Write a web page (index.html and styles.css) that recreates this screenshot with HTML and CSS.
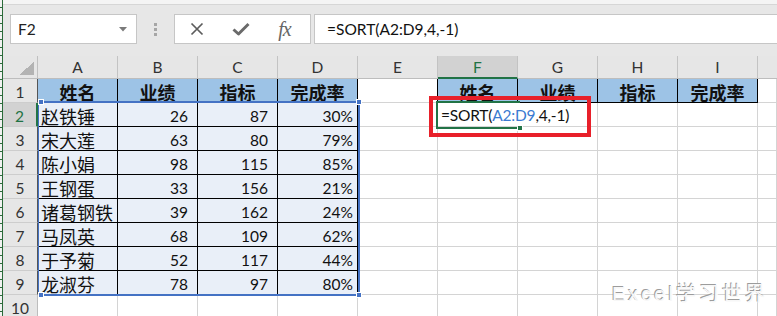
FILE: index.html
```html
<!DOCTYPE html>
<html lang="zh-CN">
<head>
<meta charset="utf-8">
<title>Excel SORT</title>
<link rel="stylesheet" href="styles.css">
</head>
<body>
<div class="app">
  <div class="edge"></div>
  <div class="main">
    <div class="topband"></div>
    <div class="fbar">
      <div class="namebox"><span>F2</span><svg class="dd" width="8" height="5" viewBox="0 0 8 5"><path d="M0 0H8L4 4.5Z" fill="#7a7a7a"/></svg></div>
      <div class="grip"><i></i><i></i><i></i></div>
      <div class="btns">
        <span class="slot"><svg width="14" height="14" viewBox="0 0 14 14"><path d="M1.5 1.5L12.5 12.5M12.5 1.5L1.5 12.5" stroke="#5c5c5c" stroke-width="1.7" fill="none"/></svg></span>
        <span class="slot"><svg width="18" height="14" viewBox="0 0 18 14"><path d="M1.5 7.5L6.5 12L16.5 2" stroke="#6a6a6a" stroke-width="3" fill="none" stroke-linejoin="round"/></svg></span>
        <span class="slot fx">fx</span>
      </div>
      <div class="formula">=SORT(A2:D9,4,-1)</div>
    </div>
    <div class="sheet">
      <div class="c corner"></div>
      <div class="c ch">A</div><div class="c ch">B</div><div class="c ch">C</div><div class="c ch">D</div><div class="c ch">E</div><div class="c ch sel">F</div><div class="c ch">G</div><div class="c ch">H</div><div class="c ch">I</div><div class="c ch last"></div>

      <div class="c rh dk">1</div>
      <div class="c t th">姓名</div><div class="c t th">业绩</div><div class="c t th">指标</div><div class="c t th">完成率</div><div class="c e1"></div><div class="c t th">姓名</div><div class="c t th">业绩</div><div class="c t th">指标</div><div class="c t th">完成率</div><div class="c"></div>

      <div class="c rh dk sel">2</div>
      <div class="c t td">赵铁锤</div><div class="c t td n">26</div><div class="c t td n">87</div><div class="c t td p">30%</div><div class="c"></div><div class="c f2">=SORT(<span class="ref">A2:D9</span>,4,-1)<span class="caret"></span></div><div class="c"></div><div class="c"></div><div class="c"></div><div class="c"></div>

      <div class="c rh dk">3</div>
      <div class="c t td">宋大莲</div><div class="c t td n">63</div><div class="c t td n">80</div><div class="c t td p">79%</div><div class="c"></div><div class="c"></div><div class="c"></div><div class="c"></div><div class="c"></div><div class="c"></div>

      <div class="c rh dk">4</div>
      <div class="c t td">陈小娟</div><div class="c t td n">98</div><div class="c t td n">115</div><div class="c t td p">85%</div><div class="c"></div><div class="c"></div><div class="c"></div><div class="c"></div><div class="c"></div><div class="c"></div>

      <div class="c rh dk">5</div>
      <div class="c t td">王钢蛋</div><div class="c t td n">33</div><div class="c t td n">156</div><div class="c t td p">21%</div><div class="c"></div><div class="c"></div><div class="c"></div><div class="c"></div><div class="c"></div><div class="c"></div>

      <div class="c rh dk">6</div>
      <div class="c t td">诸葛钢铁</div><div class="c t td n">39</div><div class="c t td n">162</div><div class="c t td p">24%</div><div class="c"></div><div class="c"></div><div class="c"></div><div class="c"></div><div class="c"></div><div class="c"></div>

      <div class="c rh dk">7</div>
      <div class="c t td">马凤英</div><div class="c t td n">68</div><div class="c t td n">109</div><div class="c t td p">62%</div><div class="c"></div><div class="c"></div><div class="c"></div><div class="c"></div><div class="c"></div><div class="c"></div>

      <div class="c rh dk">8</div>
      <div class="c t td">于予菊</div><div class="c t td n">52</div><div class="c t td n">117</div><div class="c t td p">44%</div><div class="c"></div><div class="c"></div><div class="c"></div><div class="c"></div><div class="c"></div><div class="c"></div>

      <div class="c rh dk">9</div>
      <div class="c t td">龙淑芬</div><div class="c t td n">78</div><div class="c t td n">97</div><div class="c t td p">80%</div><div class="c"></div><div class="c"></div><div class="c"></div><div class="c"></div><div class="c"></div><div class="c"></div>

      <div class="c rh">10</div>
      <div class="c"></div><div class="c"></div><div class="c"></div><div class="c"></div><div class="c"></div><div class="c"></div><div class="c"></div><div class="c"></div><div class="c"></div><div class="c"></div>

      <div class="range"><i class="h tl"></i><i class="h tr"></i><i class="h bl"></i><i class="h br"></i></div>
      <div class="active"><i class="fill"></i></div>
      <div class="redbox"></div>
      <div class="mark">Excel学习世界</div>
    </div>
  </div>
</div>
</body>
</html>
```
FILE: styles.css
```css
* { box-sizing: border-box; margin: 0; padding: 0; }
body {
  margin: 0;
  width: 777px;
  height: 316px;
  overflow: hidden;
  background: #e7e7e7;
  font-family: Lato, "Noto Sans CJK SC", sans-serif;
  color: #111;
}
.app { display: flex; height: 316px; }
.edge {
  width: 3px;
  flex: none;
  background: repeating-linear-gradient(to bottom, #f2f2f2 0 7px, #2d6b3c 7px 8px);
  border-right: 1px solid #2a6a39;
}
.main { flex: 1; min-width: 0; display: flex; flex-direction: column; }
.topband { height: 5px; flex: none; background: #f4f4f4; border-bottom: 1px solid #d6d6d6; }
.fbar {
  flex: none;
  height: 51px;
  display: flex;
  align-items: center;
  padding: 9px 0 12px 7px;
}
.namebox {
  width: 127px; height: 30px; flex: none;
  background: #fff; border: 1px solid #c6c6c6;
  display: flex; align-items: center; justify-content: space-between;
  padding: 0 9px 0 7px;
  font-size: 15.5px; color: #222;
}
.grip { margin-left: 17px; width: 3px; display: flex; flex-direction: column; gap: 2px; }
.grip i { display: block; width: 3px; height: 3px; background: #a6a6a6; }
.btns {
  margin-left: 17px; width: 137px; height: 30px; flex: none;
  background: #fff; border: 1px solid #c6c6c6;
  display: flex; align-items: center; padding-left: 0;
}
.slot { width: 44px; display: flex; justify-content: center; align-items: center; }
.slot svg { display: block; }
.fx {
  font-family: "Liberation Serif", serif; font-style: italic;
  font-size: 20px; color: #666; letter-spacing: -1px; padding-right: 1px;
}
.formula {
  flex: 1; margin-left: 3px; margin-right: -4px; height: 30px;
  background: #fff; border: 1px solid #c6c6c6;
  display: flex; align-items: center; padding-left: 12px;
  font-size: 15.5px; color: #111; white-space: nowrap;
}

.sheet {
  flex: 1;
  position: relative;
  display: grid;
  grid-template-columns: 35px repeat(9, 80px) 1fr;
  grid-template-rows: 23px repeat(10, 24px);
  background: #fff;
}
.c {
  border-right: 1px solid #d4d4d4;
  border-bottom: 1px solid #d4d4d4;
  display: flex; align-items: center;
  white-space: nowrap; overflow: hidden;
  padding-top: 3px;
  font-size: 18px;
}
.corner {
  background: #e6e6e6 linear-gradient(to top left, #b3b3b3 0 50%, transparent 50%) no-repeat right 3px bottom 3px / 15px 13px;
  border-right-color: #c0c0c0; border-bottom-color: #bdbdbd;
}
.ch {
  background: #e6e6e6; border-right-color: #c3c3c3; border-bottom-color: #bdbdbd;
  justify-content: center; font-size: 15.5px; color: #333; padding-top: 0;
}
.ch.sel { background: #d2d2d2; color: #1f7244; border-bottom: 2px solid #217346; }
.ch.last { border-right: none; }
.rh {
  background: #e6e6e6; border-right-color: #bdbdbd; border-bottom-color: #cdcdcd;
  justify-content: center; font-size: 15.5px; color: #333; padding-top: 2px;
}
.rh.dk { border-right-color: #555; }
.rh.sel { background: #d2d2d2; color: #1f7244; border-right: 2px solid #217346; }
.t { border-right-color: #000; border-bottom-color: #000; }
.th { background: #9dc3e6; font-weight: bold; justify-content: center; }
.td { background: #e9eff8; padding-left: 3px; }
.n { justify-content: flex-end; padding-right: 9px; font-size: 15.5px; }
.p { justify-content: flex-end; padding-right: 4px; font-size: 15.5px; }
.e1 { border-right-color: #000; }
.f2 {
  position: relative; z-index: 3; overflow: visible;
  border-right-color: #fff;
  padding-left: 3px; font-size: 15.5px; letter-spacing: -0.2px;
  padding-top: 1px;
}
.f2 .ref { color: #3b7bd1; }
.caret { display: inline-block; width: 1px; height: 19px; background: #222; margin-left: 2px; }
.active {
  position: absolute; left: 433px; top: 45px; width: 84px; height: 28px;
  border: 2px solid #217346; border-right: none; z-index: 2;
}
.fill {
  position: absolute; right: -3px; bottom: -4px;
  width: 6px; height: 6px; background: #217346; border: 1px solid #fff;
}
.range {
  position: absolute; left: 35px; top: 45px; width: 322px; height: 195px;
  border: 2px solid #4472c4; border-left-width: 1px; pointer-events: none; z-index: 2;
}
.h { position: absolute; width: 6px; height: 6px; background: #4472c4; border: 1px solid #fff; }
.tl { left: -1px; top: -4px; }
.tr { right: -4px; top: -4px; }
.bl { left: -1px; bottom: -4px; }
.br { right: -4px; bottom: -4px; }
.redbox {
  position: absolute; left: 426px; top: 40px; width: 162px; height: 41px;
  border: 4px solid #e8202a; z-index: 4;
}
.mark {
  position: absolute; left: 609px; top: 222px; z-index: 5;
  font-family: "Liberation Sans", "Noto Sans CJK SC", sans-serif;
  font-size: 20px; letter-spacing: 3px; color: #f7f7f7;
  text-shadow: -1px -1px 0 #9c9c9c, 1px 1px 0 #ffffff;
  white-space: nowrap;
}
```
